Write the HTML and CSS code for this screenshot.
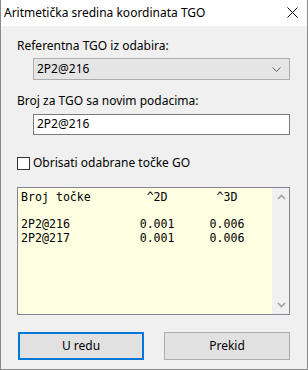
FILE: index.html
```html
<!DOCTYPE html>
<html lang="hr">

<head>
    <meta charset="UTF-8">
    <title>Aritmetička sredina koordinata TGO</title>
    <link rel="stylesheet" href="styles.css">
</head>

<body>

    <div class="window">
        <div class="titlebar">
            <span class="title">Aritmetička sredina koordinata TGO</span>
            <svg class="close" width="11" height="11" viewBox="0 0 11 11">
                <path d="M0.5 0.5 L10.5 10.5 M10.5 0.5 L0.5 10.5" stroke="#000" stroke-width="1" fill="none"/>
            </svg>
        </div>

        <div class="content">
            <div class="label">Referentna TGO iz odabira:</div>
            <div class="combo">
                <span>2P2@216</span>
                <svg width="9" height="5" viewBox="0 0 9 5">
                    <path d="M0.5 0.5 L4.5 4.5 L8.5 0.5" stroke="#606060" stroke-width="1" fill="none"/>
                </svg>
            </div>

            <div class="label second">Broj za TGO sa novim podacima:</div>
            <div class="textbox">2P2@216</div>

            <div class="check-row">
                <span class="checkbox"></span>
                <span>Obrisati odabrane točke GO</span>
            </div>

            <!-- list of points -->
            <div class="listbox">
<pre class="list-text">Broj točke        ^2D       ^3D

2P2@216          0.001     0.006
2P2@217          0.001     0.006</pre>
                <div class="scrollbar">
                    <svg width="9" height="6" viewBox="0 0 9 6">
                        <path d="M1 5 L4.5 1.5 L8 5" stroke="#a3a3a3" stroke-width="1.6" fill="none"/>
                    </svg>
                    <svg width="9" height="6" viewBox="0 0 9 6">
                        <path d="M1 1 L4.5 4.5 L8 1" stroke="#a3a3a3" stroke-width="1.6" fill="none"/>
                    </svg>
                </div>
            </div>

            <div class="buttons">
                <div class="btn default">U redu</div>
                <div class="btn">Prekid</div>
            </div>
        </div>
    </div>

</body>

</html>
```

FILE: styles.css
```css
* {
    margin: 0;
    padding: 0;
    box-sizing: border-box;
}

body {
    font-family: "Noto Sans", sans-serif;
    font-size: 12px;
    line-height: 16px;
    color: #000;
    background: #f0f0f0;
}

.window {
    width: 308px;
    height: 370px;
    background: #f0f0f0;
    border: 1px solid #8a8a8a;
    border-top: none;
}

.titlebar {
    height: 26px;
    background: #fff;
    display: flex;
    align-items: center;
    justify-content: space-between;
    padding: 0 9px 0 3px;
}

.close {
    margin-top: -1px;
}

.content {
    padding: 12px 17px 0 16px;
}

.label.second {
    margin-top: 13px;
}

.combo {
    margin: 4px 0 0 16px;
    height: 22px;
    background: #e5e5e5;
    border: 1px solid #adadad;
    display: flex;
    align-items: center;
    justify-content: space-between;
    padding: 0 8px 0 3px;
}

.combo svg {
    margin-top: 1px;
}

.textbox {
    margin: 5px 0 0 16px;
    height: 21px;
    background: #fff;
    border: 1px solid #7a7a7a;
    padding: 1px 3px;
}

.check-row {
    margin-top: 20px;
    height: 16px;
    display: flex;
    align-items: center;
    gap: 3px;
}

.checkbox {
    width: 13px;
    height: 13px;
    border: 1px solid #333;
    background: #fff;
}

.listbox {
    margin-top: 16px;
    width: 273px;
    height: 128px;
    border: 1px solid #828790;
    background: #ffffe1;
    display: flex;
}

.list-text {
    flex: 1;
    font-family: "DejaVu Sans Mono", monospace;
    font-size: 11.6px;
    line-height: 13.5px;
    padding: 3px 0 0 3px;
}

.scrollbar {
    width: 17px;
    background: #f0f0f0;
    display: flex;
    flex-direction: column;
    justify-content: space-between;
    align-items: center;
    padding: 6px 0 6px 1px;
}

.buttons {
    margin-top: 17px;
    display: flex;
    gap: 20px;
    padding-left: 1px;
}

.btn {
    width: 127px;
    height: 28px;
    background: #e1e1e1;
    border: 1px solid #adadad;
    display: flex;
    align-items: center;
    justify-content: center;
}

.btn.default {
    border: 2px solid #0078d7;
}
```
